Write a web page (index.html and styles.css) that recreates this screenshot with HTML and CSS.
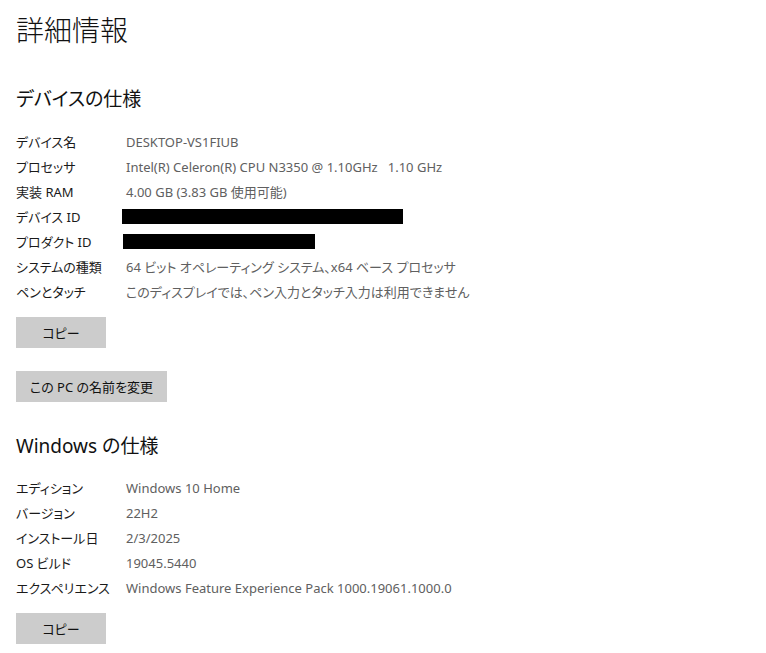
FILE: index.html
```html
<!DOCTYPE html>
<html lang="ja">
<head>
<meta charset="utf-8">
<title>詳細情報</title>
<link rel="stylesheet" href="styles.css">
</head>
<body>
<main class="page">
  <h1 class="title">詳細情報</h1>

  <section class="spec">
    <h2 class="heading">デバイスの仕様</h2>
    <dl class="rows">
      <dt>デバイス名</dt><dd>DESKTOP-VS1FIUB</dd>
      <dt>プロセッサ</dt><dd>Intel(R) Celeron(R) CPU N3350 @ 1.10GHz&nbsp;&nbsp;&nbsp;1.10 GHz</dd>
      <dt>実装 RAM</dt><dd>4.00 GB (3.83 GB 使用可能)</dd>
      <dt>デバイス ID</dt><dd><span class="redact redact-long"></span></dd>
      <dt>プロダクト ID</dt><dd><span class="redact redact-short"></span></dd>
      <dt>システムの種類</dt><dd>64 ビット オペレーティング システム、x64 ベース プロセッサ</dd>
      <dt>ペンとタッチ</dt><dd>このディスプレイでは、ペン入力とタッチ入力は利用できません</dd>
    </dl>
    <div class="actions">
      <button class="btn btn-copy" type="button">コピー</button>
      <button class="btn btn-rename" type="button">この PC の名前を変更</button>
    </div>
  </section>

  <section class="spec spec-win">
    <h2 class="heading">Windows の仕様</h2>
    <dl class="rows">
      <dt>エディション</dt><dd>Windows 10 Home</dd>
      <dt>バージョン</dt><dd>22H2</dd>
      <dt>インストール日</dt><dd>2/3/2025</dd>
      <dt>OS ビルド</dt><dd>19045.5440</dd>
      <dt>エクスペリエンス</dt><dd>Windows Feature Experience Pack 1000.19061.1000.0</dd>
    </dl>
    <div class="actions">
      <button class="btn btn-copy" type="button">コピー</button>
    </div>
  </section>
</main>
</body>
</html>
```
FILE: styles.css
```css
html, body {
  margin: 0;
  padding: 0;
  background: #ffffff;
}

body {
  font-family: "Noto Sans", "Noto Sans CJK JP", sans-serif;
  font-feature-settings: "palt";
  color: #000000;
}

.page {
  padding: 10px 16px 0 16px;
}

.title {
  margin: 0;
  font-size: 28px;
  font-weight: 300;
  line-height: 40px;
  color: #111111;
}

.heading {
  margin: 0;
  font-size: 19px;
  font-weight: 400;
  line-height: 28px;
  color: #111111;
}

.spec {
  margin-top: 35px;
}

.spec-win {
  margin-top: 30px;
}

.spec-win .rows {
  margin-top: 15px;
}

.rows {
  display: grid;
  grid-template-columns: 110px 1fr;
  grid-auto-rows: 25px;
  margin: 16px 0 0 0;
  font-size: 13px;
}

.rows dt,
.rows dd {
  margin: 0;
  display: flex;
  align-items: center;
  white-space: nowrap;
}

.rows dt {
  color: #1a1a1a;
}

.rows dd {
  color: #606060;
}

.redact {
  display: block;
  height: 15px;
  background: #000000;
}

.redact-long {
  width: 281px;
  margin-left: -4px;
}

.redact-short {
  width: 192px;
  margin-left: -3px;
}

.actions {
  display: flex;
  flex-direction: column;
  align-items: flex-start;
  gap: 23px;
  margin-top: 13px;
}

.btn {
  height: 31px;
  border: none;
  background: #cccccc;
  color: #111111;
  font-family: "Noto Sans", "Noto Sans CJK JP", sans-serif;
  font-feature-settings: "palt";
  font-size: 13px;
  padding: 0 12px;
  cursor: pointer;
}

.btn-copy {
  width: 90px;
}

.btn-rename {
  width: 151px;
}
```
